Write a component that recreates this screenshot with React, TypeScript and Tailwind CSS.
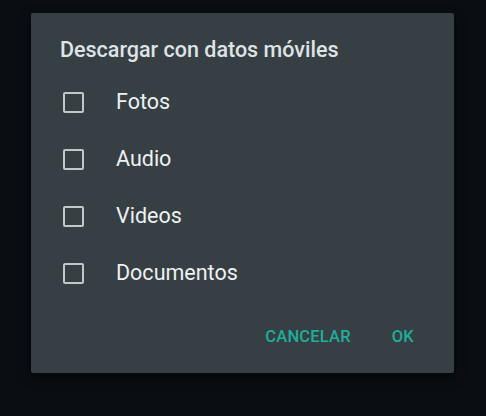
const items = ["Fotos", "Audio", "Videos", "Documentos"];

export default function App() {
  return (
    <div className="w-[486px] h-[416px] bg-[#0a0e12] pl-[31px] pt-[13px] font-['Roboto','Liberation_Sans',sans-serif]">
      <div className="w-[423px] h-[360px] bg-[#363f44] rounded-[2px] shadow-[0_4px_12px_rgba(0,0,0,0.6)] flex flex-col">
        {/* Title */}
        <h1 className="pl-[29px] pt-[25px] text-[21.5px] leading-[24px] font-medium text-[#dfe3e4]">
          Descargar con datos móviles
        </h1>

        {/* Options */}
        <div className="mt-[12px] flex flex-col">
          {items.map((item) => (
            <label key={item} className="h-[57px] flex items-center pl-[32px]">
              <span className="w-[21px] h-[21px] border-2 border-[#c3c7c9] rounded-[2px]" />
              <span className="ml-[32px] text-[21.5px] text-[#eef0f1]">{item}</span>
            </label>
          ))}
        </div>

        {/* Actions */}
        <div className="mt-auto mb-[23px] flex justify-end items-center gap-[41px] pr-[40px] text-[16.5px] font-medium text-[#1fae98] tracking-[0.2px]">
          <button>CANCELAR</button>
          <button>OK</button>
        </div>
      </div>
    </div>
  );
}
